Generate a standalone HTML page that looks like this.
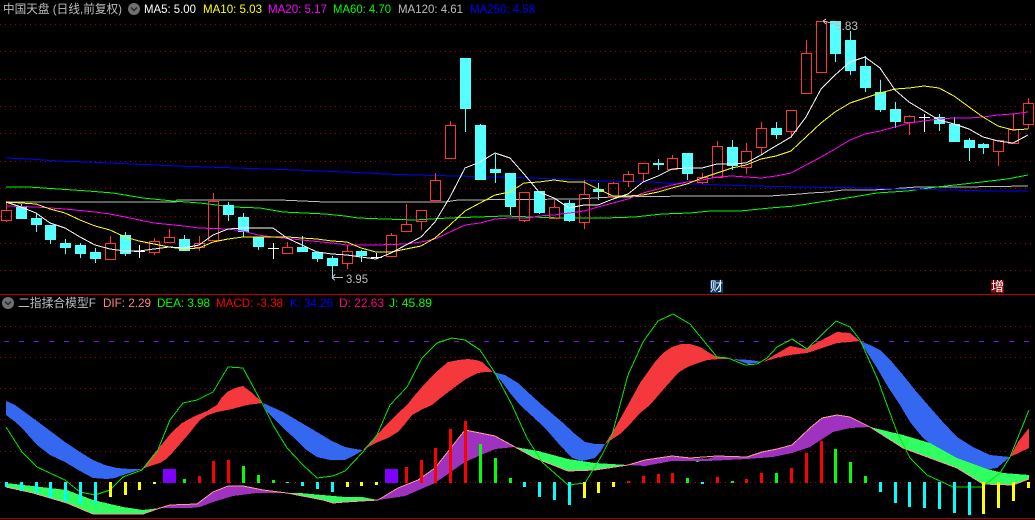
<!DOCTYPE html>
<html lang="zh">
<head>
<meta charset="utf-8">
<title>K线图</title>
<style>
html,body{margin:0;padding:0;background:#000;width:1035px;height:520px;overflow:hidden}
svg{display:block}
text{font-family:"Liberation Sans","WenQuanYi Zen Hei","Noto Sans CJK SC",sans-serif;font-size:12px}
.c{shape-rendering:crispEdges}
</style>
</head>
<body>
<svg width="1035" height="520" viewBox="0 0 1035 520" xmlns="http://www.w3.org/2000/svg">
<rect width="1035" height="520" fill="#000"/>

<!-- grid -->
<g class="c" stroke="#a00000" stroke-width="1" stroke-dasharray="1 4" fill="none">
<path d="M0 24.5H1035M0 51.5H1035M0 79.5H1035M0 106.5H1035M0 133.5H1035M0 161.5H1035M0 188.5H1035M0 216.5H1035M0 243.5H1035M0 270.5H1035"/>
<path d="M0 326.5H1035M0 357.5H1035M0 388.5H1035M0 419.5H1035M0 451.5H1035M0 482.5H1035"/>
</g>
<path class="c" d="M4 341.5H1035" stroke="#7a12d8" stroke-dasharray="5 10" fill="none"/>
<path class="c" d="M0 294.5H1035" stroke="#c00000" fill="none"/>
<path class="c" d="M0 518.5H1035" stroke="#a80000" fill="none"/>

<!-- long MAs behind candles -->
<g class="c" fill="none" stroke-width="1">
<polyline stroke="#bdbdbd" points="6,202 29,202 176,202 177,200 280,200 325,202 445,202 458,200 578,199 612,197 690,196 769,196 800,194 810,193 828,192 843,190 873,190 903,188 917,187 962,187 1028,186"/>
<polyline stroke="#00ff00" points="6,187 29,187 58,189 88,191 113,193 143,198 173,201 200,203 233,207 260,208 283,212 325,214 345,216 358,218 384,219 415,220 448,218 478,217 505,216 532,217 562,218 605,218 635,217 662,214 690,213 710,211 740,211 770,208 795,206 820,202 847,198 877,193 907,191 937,187 973,183 1007,179 1028,175"/>
<polyline stroke="#0000ff" points="6,158 29,159 58,161 88,162 133,164 177,166 207,167 237,168 295,170 345,172 368,173 384,174 415,175 495,177 532,178 578,180 605,181 651,182 680,184 695,184 725,185 753,186 800,187 873,188 903,189 947,190 992,191 1028,191"/>
</g>

<!-- red candles -->
<path class="c" fill="none" stroke="#ff3535" d="M1.5 210.5h10v10h-10zM6.5 201v9M6.5 221v1M105.5 243.5h10v16h-10zM110.5 236v7M149.5 241.5h10v11h-10zM154.5 238v3M154.5 253v2M164.5 237.5h10v5h-10zM169.5 229v8M194.5 243.5h10v4h-10zM199.5 236v7M199.5 248v3M208.5 201.5h10v39h-10zM213.5 193v8M282.5 247.5h10v6h-10zM287.5 242v5M342.5 251.5h10v12h-10zM347.5 245v6M347.5 264v5M386.5 235.5h10v21h-10zM391.5 233v2M401.5 224.5h10v7h-10zM406.5 204v20M416.5 210.5h10v11h-10zM421.5 222v8M430.5 180.5h10v20h-10zM435.5 173v7M445.5 125.5h10v33h-10zM450.5 121v4M519.5 192.5h10v28h-10zM524.5 221v1M549.5 207.5h10v11h-10zM554.5 200v7M579.5 194.5h10v28h-10zM584.5 180v14M584.5 223v6M608.5 183.5h10v13h-10zM613.5 182v1M623.5 174.5h10v7h-10zM628.5 171v3M628.5 182v5M638.5 163.5h10v10h-10zM643.5 174v8M667.5 158.5h10v11h-10zM672.5 155v3M697.5 177.5h10v5h-10zM702.5 173v4M702.5 183v1M712.5 146.5h10v31h-10zM717.5 141v5M741.5 151.5h10v16h-10zM746.5 143v8M746.5 168v6M756.5 128.5h10v19h-10zM761.5 122v6M761.5 148v7M786.5 110.5h10v21h-10zM791.5 132v6M801.5 53.5h10v40h-10zM806.5 40v13M816.5 21.5h10v51h-10zM904.5 116.5h10v6h-10zM909.5 115v1M909.5 123v12M993.5 140.5h10v11h-10zM998.5 152v14M1008.5 129.5h10v14h-10zM1013.5 113v16M1023.5 103.5h10v21h-10zM1028.5 98v5M1028.5 125v4"/>

<!-- cyan candles -->
<path class="c" fill="none" stroke="#54ffff" d="M21.5 204v15M36.5 214v18M50.5 225v19M65.5 239v15M80.5 243v15M95.5 248v15M125.5 232v24M184.5 235v16M228.5 202v19M243.5 213v24M258.5 237v13M302.5 236v16M317.5 252v10M332.5 256v23M361.5 250v12M465.5 58v74M480.5 124v56M495.5 154v29M510.5 173v42M539.5 191v23M569.5 200v22M598.5 183v17M658.5 159v11M687.5 153v27M732.5 140v30M776.5 122v17M835.5 21v41M850.5 31v44M865.5 56v36M880.5 80v32M895.5 102v26M939.5 114v17M954.5 117v25M969.5 138v23M983.5 143v11"/>
<path class="c" fill="#54ffff" d="M16 207h11v12h-11zM31 218h11v7h-11zM45 225h11v15h-11zM60 243h11v5h-11zM75 245h11v9h-11zM90 252h11v7h-11zM120 235h11v19h-11zM179 239h11v12h-11zM223 205h11v10h-11zM238 217h11v15h-11zM253 237h11v10h-11zM297 247h11v5h-11zM312 252h11v7h-11zM327 258h11v8h-11zM356 251h11v5h-11zM460 58h11v51h-11zM475 125h11v55h-11zM490 169h11v4h-11zM505 173h11v34h-11zM534 191h11v22h-11zM564 203h11v18h-11zM593 189h11v3h-11zM653 163h11v2h-11zM682 153h11v21h-11zM727 147h11v19h-11zM771 128h11v7h-11zM830 21h11v33h-11zM845 40h11v31h-11zM860 66h11v22h-11zM875 92h11v18h-11zM890 109h11v13h-11zM934 117h11v7h-11zM949 124h11v18h-11zM964 140h11v8h-11zM978 144h11v4h-11z"/>

<!-- doji -->
<path class="c" fill="none" stroke="#fff" d="M134 251.5h11M139.5 245v13M268 248.5h11M273.5 243v16M371 257.5h11M376.5 253v6M919 117.5h11M924.5 114v18"/>

<!-- short MAs -->
<g class="c" fill="none" stroke-width="1">
<polyline stroke="#ff00ff" points="6,206 36,207 65,209 95,212 110,214 125,217 154,223 184,226 199,228 228,229 243,231 258,235 273,237 302,240 332,243 347,245 376,245 406,244 421,242 435,239 450,232 465,225 480,223 495,219 510,218 529,218 539,216 554,215 569,213 584,211 598,207 613,203 628,199 643,193 658,189 672,185 687,182 702,180 717,177 732,176 746,177 761,178 776,176 791,173 806,165 821,157 835,149 850,140 865,134 880,131 895,127 909,123 924,121 939,119 954,118 969,118 983,117 998,115 1013,114 1028,112"/>
<polyline stroke="#ffff00" points="6,202 21,203 36,204 50,209 65,213 80,220 95,226 110,230 125,237 139,241 154,244 169,247 184,249 199,248 213,242 228,239 243,237 258,237 273,237 287,237 302,238 317,239 332,241 347,242 361,248 376,252 391,252 406,249 421,246 435,238 450,225 465,211 480,203 495,195 510,192 524,183 539,182 554,180 569,182 584,182 598,189 613,196 628,196 643,195 658,192 672,188 687,184 702,178 717,173 732,168 746,165 761,159 776,156 791,151 806,137 821,123 835,112 850,103 865,98 880,93 895,89 909,88 924,86 939,88 954,96 969,107 983,117 998,126 1013,130 1028,129"/>
<polyline stroke="#ffffff" points="6,202 21,207 36,213 50,223 65,228 80,237 95,245 110,249 125,251 139,251 154,249 169,247 184,248 199,245 213,235 228,229 243,228 258,228 273,228 287,238 302,245 317,252 332,254 347,255 361,257 376,259 391,253 406,245 421,237 435,222 450,197 465,168 480,162 495,153 510,158 524,174 539,192 554,198 569,208 584,205 598,205 613,199 628,194 643,182 658,176 672,169 687,168 702,168 717,164 732,164 746,163 761,155 769,150 791,137 806,117 821,89 835,75 850,62 865,57 880,68 895,90 909,102 924,111 939,120 954,124 969,129 983,137 998,141 1013,143 1028,135"/>
</g>

<!-- high/low markers -->
<path class="c" fill="none" stroke="#bdbdbd" d="M823 21l12 3M823 21l3 -2M823 21l3 3M332 277.5h11M332 277.5l3 -3M332 277.5l3 3"/>
<text x="835" y="30" fill="#bdbdbd" textLength="23" lengthAdjust="spacingAndGlyphs">5.83</text>
<text x="346" y="283" fill="#bdbdbd" textLength="22" lengthAdjust="spacingAndGlyphs">3.95</text>

<!-- badges -->
<rect class="c" x="710" y="280" width="13" height="13" fill="#0c3c6e"/>
<text x="710" y="291" fill="#fff" style="font-size:13px">财</text>
<rect class="c" x="991" y="280" width="13" height="13" fill="#800000"/>
<text x="991" y="291" fill="#fff" style="font-size:13px">增</text>

<!-- header upper -->
<text x="3" y="13" fill="#bdbdbd" textLength="119" lengthAdjust="spacingAndGlyphs">中国天盘 (日线,前复权)</text>
<circle cx="134" cy="9" r="6" fill="#707070"/>
<path d="M131 7.5l3 3 3-3" fill="none" stroke="#262626" stroke-width="1.4"/>
<text x="144" y="13" fill="#ffffff" textLength="52" lengthAdjust="spacingAndGlyphs">MA5: 5.00</text>
<text x="203" y="13" fill="#ffff00" textLength="59" lengthAdjust="spacingAndGlyphs">MA10: 5.03</text>
<text x="268" y="13" fill="#ff00ff" textLength="59" lengthAdjust="spacingAndGlyphs">MA20: 5.17</text>
<text x="333" y="13" fill="#00ff00" textLength="58" lengthAdjust="spacingAndGlyphs">MA60: 4.70</text>
<text x="398" y="13" fill="#bdbdbd" textLength="65" lengthAdjust="spacingAndGlyphs">MA120: 4.61</text>
<text x="470" y="13" fill="#0000ff" textLength="65" lengthAdjust="spacingAndGlyphs">MA250: 4.58</text>

<!-- header lower -->
<circle cx="8" cy="303" r="6" fill="#707070"/>
<path d="M5 301.5l3 3 3-3" fill="none" stroke="#262626" stroke-width="1.4"/>
<text x="18" y="307" fill="#bdbdbd" textLength="78" lengthAdjust="spacingAndGlyphs">二指揉合模型F</text>
<text x="103" y="307" fill="#ff8080" textLength="48" lengthAdjust="spacingAndGlyphs">DIF: 2.29</text>
<text x="157" y="307" fill="#00ff00" textLength="53" lengthAdjust="spacingAndGlyphs">DEA: 3.98</text>
<text x="216" y="307" fill="#ff0000" textLength="67" lengthAdjust="spacingAndGlyphs">MACD: -3.38</text>
<text x="290" y="307" fill="#0000ff" textLength="43" lengthAdjust="spacingAndGlyphs">K: 34.26</text>
<text x="339" y="307" fill="#ff0080" textLength="45" lengthAdjust="spacingAndGlyphs">D: 22.63</text>
<text x="389" y="307" fill="#00ff00" textLength="43" lengthAdjust="spacingAndGlyphs">J: 45.89</text>

<!-- blue / red bands -->
<g class="c">
<g fill="#3468f0">
<polygon points="6,401 15,405 37,421 65,442 80,452 93,460 105,465 117,468 130,469 142,469 133,472 123,475 115,478 107,479 93,478 80,471 65,462 50,455 37,445 28,435 22,428 14,421 6,415"/>
<polygon points="263,403 283,412 300,422 317,432 332,441 345,447 355,449 363,450 355,455 345,460 330,460 317,457 305,449 292,436 283,428 275,420 267,412"/>
<polygon points="493,372 505,375 518,383 530,394 542,405 562,422 575,434 585,442 595,444 605,444 601,451 595,458 582,461 572,458 558,443 545,428 532,416 520,405 510,393 502,382"/>
<polygon points="733,359 750,360 763,362 748,364"/>
<polygon points="860,341 870,345 880,350 892,362 903,375 915,390 928,405 942,421 957,437 973,447 990,455 1000,456 1010,457 1004,462 997,468 983,470 970,467 957,462 940,451 923,438 910,422 900,405 888,387 877,368 868,354"/>
</g>
<g fill="#f4383c">
<polygon points="142,469 152,456 163,443 172,432 182,423 195,416 207,411 217,405 222,397 227,392 235,388 243,386 251,392 263,403 255,404 247,405 232,409 217,412 208,415 200,420 187,436 173,452 165,460 160,463 150,466"/>
<polygon points="363,450 375,437 388,423 398,413 407,405 415,395 422,387 435,373 448,362 458,360 468,359 476,360 482,362 493,372 485,372 478,373 466,379 455,387 443,396 432,405 423,409 412,415 405,424 398,432 388,438 378,442 370,446"/>
<polygon points="605,444 615,428 628,405 640,383 655,362 663,353 672,347 681,344 690,344 700,347 708,352 717,357 725,358 733,359 720,359 707,360 698,363 690,366 684,369 678,373 663,390 650,405 640,413 632,422 620,434"/>
<polygon points="763,362 776,354 790,346 805,349 820,341 837,332 850,333 860,341 850,342 837,343 822,348 807,353 790,355 776,358"/>
<polygon points="1010,457 1018,442 1029,428 1029,448"/>
</g>

<!-- green / purple bands -->
<g fill="#30ff60">
<polygon points="6,483 67,490 93,500 123,507 143,510 160,508 143,514 93,514 67,503 33,493 6,487"/>
<polygon points="287,493 300,493 345,497 362,497 378,500 345,502 333,503 323,500"/>
<polygon points="515,447 538,451 568,459 595,463 628,465 595,470 568,471 535,458"/>
<polygon points="690,458 707,459 697,462"/>
<polygon points="870,427 903,435 930,443 957,458 987,469 1003,473 1029,475 1029,479 1013,485 983,484 957,468 903,448"/>
</g>
<g fill="#9f33c0">
<polygon points="160,508 170,505 197,504 213,492 228,486 243,486 263,490 287,493 257,493 233,496 213,502 200,507 190,508"/>
<polygon points="378,500 398,488 418,480 435,468 465,430 495,436 515,447 495,449 465,462 435,483 405,496"/>
<polygon points="628,465 645,460 672,456 690,458 707,459 717,456 747,457 762,452 777,449 792,445 810,428 822,418 837,415 850,417 870,427 850,428 833,432 810,447 792,453 773,457 747,459 707,461 672,461 645,466"/>
</g>
<polyline fill="none" stroke="#ff9a9a" points="6,487 33,493 67,503 93,514 143,514 160,508 170,505 197,504 213,492 228,486 243,486 263,490 287,493 323,500 333,503 345,502 378,500 398,488 418,480 435,468 465,430 495,436 515,447 535,458 568,471 595,470 628,465 645,460 672,456 690,458 717,456 747,457 762,452 777,449 792,445 810,428 822,418 837,415 850,417 870,427 903,448 957,468 983,484 1013,485 1029,479"/>

<!-- J line -->
<polyline fill="none" stroke="#00e800" points="6,427 22,452 37,467 65,480 80,492 95,495 110,490 123,477 142,470 157,452 170,420 183,403 197,400 213,392 228,367 243,368 263,405 273,425 287,448 303,465 317,478 333,476 345,471 363,452 377,435 390,405 407,387 422,358 437,343 452,338 465,340 480,350 495,373 512,405 527,438 542,462 568,485 585,483 602,455 612,435 620,405 628,375 643,342 658,321 673,314 690,324 717,357 728,358 745,365 757,364 767,358 777,347 792,339 807,349 836,321 850,327 860,340 878,380 887,405 897,432 910,458 927,475 953,487 982,487 1000,473 1010,457 1029,410"/>

<!-- histogram -->
<path fill="#00ffff" d="M5 482h3v5h-3zM20 482h3v9h-3zM35 482h3v11h-3zM49 482h3v16h-3zM64 482h3v20h-3zM79 482h3v22h-3zM94 482h3v22h-3zM286 482h3v1h-3zM301 482h3v4h-3zM316 482h3v7h-3zM331 482h3v10h-3zM523 482h3v5h-3zM538 482h3v15h-3zM553 482h3v18h-3zM568 482h3v23h-3zM701 482h3v2h-3zM879 482h3v10h-3zM894 482h3v21h-3zM908 482h3v25h-3zM923 482h3v26h-3zM938 482h3v27h-3zM953 482h3v31h-3zM968 482h3v33h-3z"/>
<path fill="#ffff00" d="M109 482h3v15h-3zM124 482h3v13h-3zM138 482h3v8h-3zM153 482h3v2h-3zM346 482h3v5h-3zM360 482h3v4h-3zM375 482h3v3h-3zM583 482h3v16h-3zM597 482h3v11h-3zM612 482h3v5h-3zM982 482h3v32h-3zM997 482h3v26h-3zM1012 482h3v19h-3zM1027 482h3v6h-3z"/>
<path fill="#00ff00" d="M183 479h3v4h-3zM242 466h3v17h-3zM257 475h3v8h-3zM272 480h3v3h-3zM479 444h3v39h-3zM494 458h3v25h-3zM509 478h3v5h-3zM686 478h3v5h-3zM731 481h3v2h-3zM775 473h3v10h-3zM834 449h3v34h-3zM849 462h3v21h-3zM864 476h3v7h-3z"/>
<path fill="#ff0000" d="M198 476h3v7h-3zM212 461h3v22h-3zM227 460h3v23h-3zM405 467h3v16h-3zM420 460h3v23h-3zM434 448h3v35h-3zM449 429h3v54h-3zM464 421h3v62h-3zM627 481h3v2h-3zM642 476h3v7h-3zM657 474h3v9h-3zM671 473h3v10h-3zM716 477h3v6h-3zM745 479h3v4h-3zM760 473h3v10h-3zM790 468h3v15h-3zM805 453h3v30h-3zM820 441h3v42h-3z"/>
<path fill="#8000ff" d="M163 469h13v14h-13zM385 469h13v14h-13z"/>
</g>
</svg>
</body>
</html>
